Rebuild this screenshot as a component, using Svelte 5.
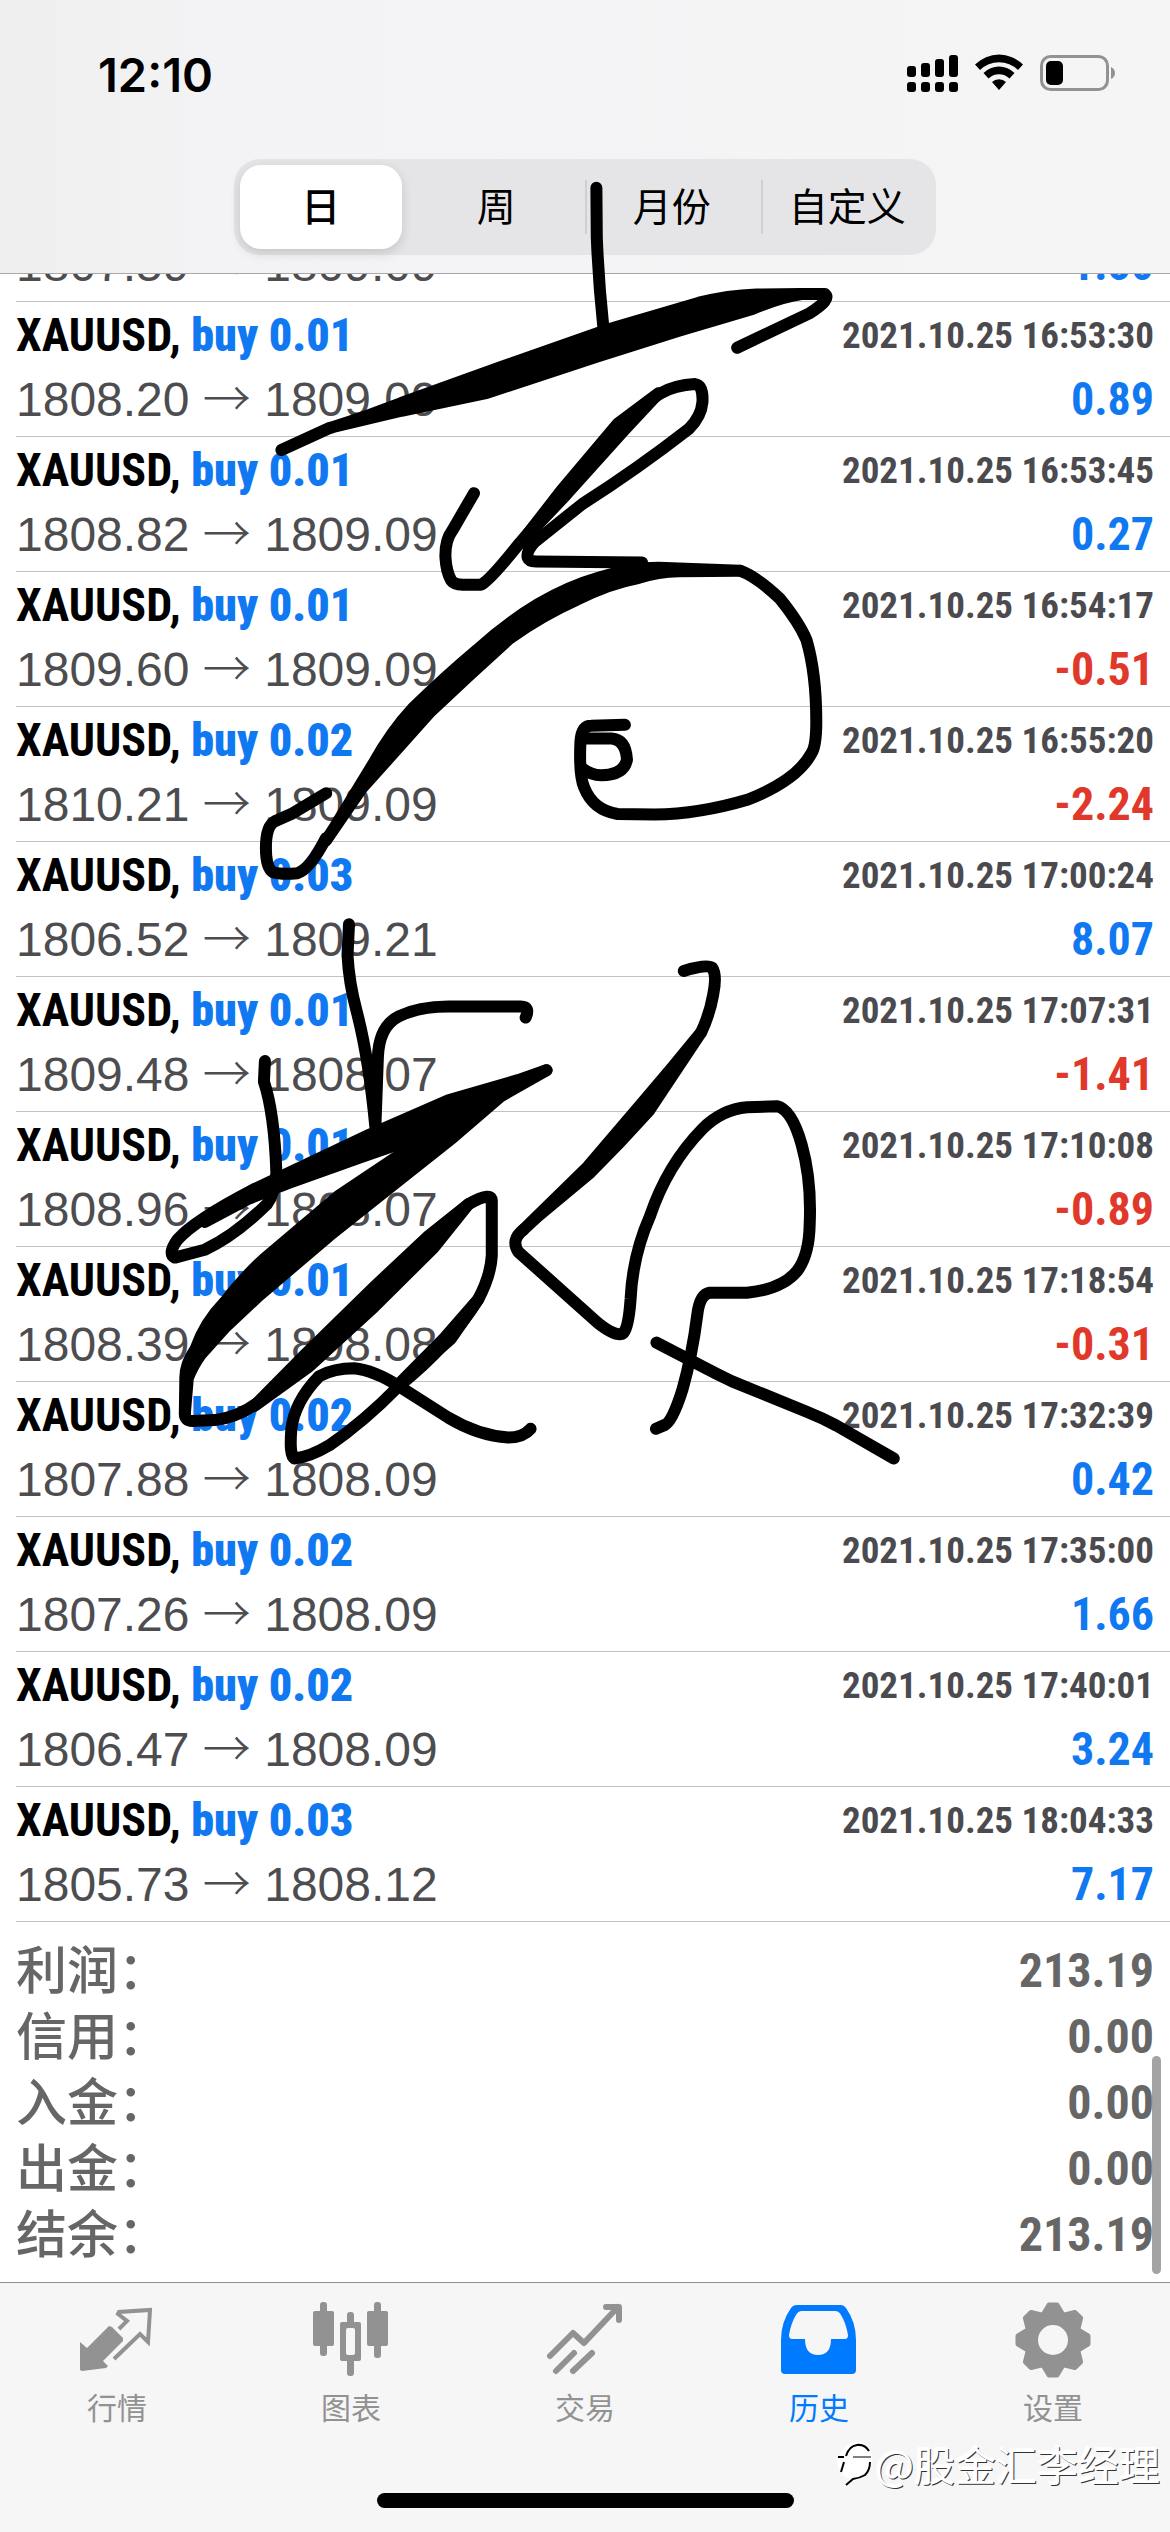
<script>
  const periods = ['日', '周', '月份', '自定义'];
  let period = $state('日');

  // the first row is scrolled under the header, only its price line is left
  const trades = [
    { open: '1807.59', close: '1809.09', profit: '1.50' },
    { lot: '0.01', open: '1808.20', close: '1809.09', time: '2021.10.25 16:53:30', profit: '0.89' },
    { lot: '0.01', open: '1808.82', close: '1809.09', time: '2021.10.25 16:53:45', profit: '0.27' },
    { lot: '0.01', open: '1809.60', close: '1809.09', time: '2021.10.25 16:54:17', profit: '-0.51' },
    { lot: '0.02', open: '1810.21', close: '1809.09', time: '2021.10.25 16:55:20', profit: '-2.24' },
    { lot: '0.03', open: '1806.52', close: '1809.21', time: '2021.10.25 17:00:24', profit: '8.07' },
    { lot: '0.01', open: '1809.48', close: '1808.07', time: '2021.10.25 17:07:31', profit: '-1.41' },
    { lot: '0.01', open: '1808.96', close: '1808.07', time: '2021.10.25 17:10:08', profit: '-0.89' },
    { lot: '0.01', open: '1808.39', close: '1808.08', time: '2021.10.25 17:18:54', profit: '-0.31' },
    { lot: '0.02', open: '1807.88', close: '1808.09', time: '2021.10.25 17:32:39', profit: '0.42' },
    { lot: '0.02', open: '1807.26', close: '1808.09', time: '2021.10.25 17:35:00', profit: '1.66' },
    { lot: '0.02', open: '1806.47', close: '1808.09', time: '2021.10.25 17:40:01', profit: '3.24' },
    { lot: '0.03', open: '1805.73', close: '1808.12', time: '2021.10.25 18:04:33', profit: '7.17' },
  ];

  const totals = [
    ['利润', '213.19'],
    ['信用', '0.00'],
    ['入金', '0.00'],
    ['出金', '0.00'],
    ['结余', '213.19'],
  ];

  const tabs = [
    { id: 'quotes', label: '行情' },
    { id: 'chart', label: '图表' },
    { id: 'trade', label: '交易' },
    { id: 'history', label: '历史' },
    { id: 'settings', label: '设置' },
  ];
  let current = $state('history');
</script>

<div class="app">
  <header>
    <div class="status">
      <time>12:10</time>
      <svg class="status-icons" viewBox="0 0 210 40" aria-hidden="true">
        <g>
          <rect x="1" y="12" width="9" height="11" rx="3" />
          <rect x="15" y="9" width="9" height="14" rx="3" />
          <rect x="29" y="5" width="9" height="18" rx="3" />
          <rect x="43" y="1" width="9" height="22" rx="3" />
          <rect x="1" y="28" width="9" height="10" rx="3" />
          <rect x="15" y="28" width="9" height="10" rx="3" />
          <rect x="29" y="28" width="9" height="10" rx="3" />
          <rect x="43" y="28" width="9" height="10" rx="3" />
        </g>
        <path d="M69 10.500 A34 34 0 0 1 117 10.500 L112 16 A27 27 0 0 0 74 16 Z" />
        <path d="M77.500 19 A22 22 0 0 1 108.500 19 L103.500 24.500 A15 15 0 0 0 82.500 24.500 Z" />
        <path d="M86 28 A10 10 0 0 1 100 28 L93 36 Z" />
        <rect x="135.500" y="2.500" width="66" height="33" rx="9" class="cell" />
        <rect x="140" y="7" width="17" height="24" rx="5" />
        <path d="M205 13 q4 2 4 6 t-4 6 Z" class="cap" />
      </svg>
    </div>
    <div class="segments">
      {#each periods as p}
        <button type="button" class:selected={period === p} onclick={() => (period = p)}>
          <span>{p}</span>
        </button>
      {/each}
    </div>
  </header>

  <main>
    <ul class="trades">
      {#each trades as t}
        <li>
          {#if t.time}
            <div class="line">
              <span class="symbol">XAUUSD, <b>buy {t.lot}</b></span>
              <span class="time">{t.time}</span>
            </div>
          {/if}
          <div class="line">
            <span class="price">{t.open} <i>→</i> {t.close}</span>
            <span class="profit" class:loss={t.profit.startsWith('-')}>{t.profit}</span>
          </div>
        </li>
      {/each}
    </ul>
    <dl class="totals">
      {#each totals as [name, value]}
        <div>
          <dt>{name}：</dt>
          <dd>{value}</dd>
        </div>
      {/each}
    </dl>
    <div class="scrollbar"></div>
  </main>

  <footer>
    <nav>
      {#each tabs as tab}
        <a href="#{tab.id}" class:active={current === tab.id} onclick={() => (current = tab.id)}>
          <svg viewBox="0 0 80 80" aria-hidden="true">
            {#if tab.id === 'quotes'}
              <path d="M3 42 L10 48 L32 26 L35 27 L46 38 V41 L26 61 L31 66 L29 68 L5 71 L3 70 Z" />
              <path class="line-4" d="M42 29 L50 21 L41 14 L42 12 L73 10 L71 42 L63 34 L37 59" />
            {:else if tab.id === 'chart'}
              <rect x="2" y="11" width="21" height="35" rx="2" />
              <rect x="9" y="2" width="7" height="54" rx="3" />
              <path fill-rule="evenodd" d="M31 22 H48 Q50 22 50 24 V59 Q50 61 48 61 H31 Q29 61 29 59 V24 Q29 22 31 22 Z M37 28 Q35 28 35 30 V53 Q35 55 37 55 H42 Q44 55 44 53 V30 Q44 28 42 28 Z" />
              <rect x="36" y="12" width="7" height="13" rx="3" />
              <rect x="36" y="58" width="7" height="18" rx="3" />
              <rect x="56" y="11" width="21" height="35" rx="2" />
              <rect x="63" y="2" width="7" height="56" rx="3" />
            {:else if tab.id === 'trade'}
              <path class="line-6" d="M5 56 L28 33 L39 43 L73 7 M61 7 H74 V20" />
              <path class="line-6" d="M11 71 L29 53 M28 71 L47 53" />
            {:else if tab.id === 'history'}
              <path fill-rule="evenodd" d="M18 5 H62 Q65 5 67 8 Q77 22 77 40 V70 Q77 74 73 74 H6 Q2 74 2 70 V40 Q2 22 12 8 Q14 5 18 5 Z M23 11 Q19 11 17 15 Q12 23 10 35 Q10 39 13 39 H26 Q26 55 39 55 Q52 55 52 39 H66 Q69 39 69 35 Q67 23 62 15 Q60 11 56 11 Z" />
            {:else}
              <circle class="ring" cx="40" cy="40" r="22" />
              {#each [0, 45, 90, 135, 180, 225, 270, 315] as angle}
                <path class="tooth" transform="rotate({angle} 40 40)" d="M36 5 H44 L50 15 H30 Z" />
              {/each}
            {/if}
          </svg>
          <span>{tab.label}</span>
        </a>
      {/each}
    </nav>
    <div class="home"></div>
    <div class="watermark">
      <svg viewBox="0 0 40 48" aria-hidden="true">
        <path class="blob" d="M10 8 Q22 -2 33 7 Q42 22 32 35 Q24 40 13 46 L14 40 Q2 34 2 20 Z" />
        <path d="M3 18 H9 M11 17 Q14 7 22 6 Q30 5 34 12 M9 23 L6 33 M35 23 Q35 31 30 36 Q25 39 18 40 L11 46" />
        <path class="thin" d="M18 18 H36" />
      </svg>
      <span>@股金汇李经理</span>
    </div>
  </footer>

  <!-- handwritten marks over the whole screen -->
  <svg class="ink" viewBox="0 0 1170 2532" aria-hidden="true">
    <g transform="translate(230 150) scale(0.408 0.4847)">
      <path d="M898 78 L899 180 Q903 270 915 365" />
      <path class="full" d="M126 619 L240 575 Q330 552 420 522 L660 449 L920 372 L1150 315 Q1220 300 1290 298 L1400 297 Q1350 303 1280 328 L1100 373 L900 426 L630 501 L420 538 L245 573 Z" />
      <path d="M1400 297 L1458 297 Q1475 308 1420 337 L1243 408" />
      <path d="M598 708 L545 785 Q527 805 528 840 Q530 870 542 888 Q550 897 570 897 L615 897 Q635 890 710 811 L816 708 L958 572 Q1010 525 1053 503 Q1090 485 1140 483 Q1160 485 1158 520 Q1155 550 1125 575 Q1000 657 864 730 L745 810 Q725 830 730 842 Q733 849 750 849 L1010 851" />
      <path class="full" d="M715 808 L811 704 L950 565 L1050 502 L966 578 L823 712 Z" />
      <path d="M236 1327 L150 1370 L110 1385 Q88 1395 88 1440 Q88 1480 105 1490 Q125 1495 165 1492 Q195 1485 235 1420" />
      <path class="full" d="M235 1425 L258 1395 L350 1268 Q395 1200 448 1152 Q530 1085 605 1032 Q680 975 755 937 Q830 900 905 882 Q980 862 1050 862 L1250 868 L1100 869 Q1050 870 1000 883 Q925 895 850 928 Q765 960 685 1008 Q590 1080 492 1158 L322 1318 Z" />
      <path d="M1250 868 Q1290 880 1347 925 Q1395 975 1413 1011 Q1437 1080 1437 1180 Q1437 1230 1425 1245 Q1390 1300 1270 1340 Q1150 1370 1040 1371 L950 1370 Q890 1362 868 1315 Q855 1290 859 1220 Q862 1188 885 1188 L968 1186" />
      <path d="M862 1214 L935 1214 Q970 1216 973 1258 Q965 1290 910 1290 Q885 1290 862 1275" />
    </g>
    <g transform="translate(150 880) scale(0.4975 0.3954)">
      <path d="M400 112 L397 190 Q400 260 415 330 Q440 450 453 625 L458 450 Q460 370 500 345 Q540 320 600 320 L745 320 Q765 320 755 348" />
      <path d="M231 458 L229 510 Q250 590 254 740 Q252 790 235 820 Q170 900 110 935 L50 955 Q35 945 55 910 Q90 860 210 782" />
      <path class="full" d="M797 481 L740 506 L600 557 L440 645 L210 782 L110 865 L200 805 L275 768 L420 703 L540 650 L600 600 Z" />
      <path class="full" d="M797 481 L520 680 L378 800 L228 960 Q185 1010 150 1068 Q110 1120 92 1185 Q70 1225 71 1262 L70 1350 L76 1260 Q85 1230 102 1200 L152 1130 L220 1050 L360 900 L480 780 L610 650 L730 520 Z" />
      <path d="M70 1350 Q70 1368 85 1368 L130 1366 Q180 1360 230 1310 L640 820 Q690 785 687 815 L687 950 Q685 1000 660 1060 Q600 1180 500 1280 Q430 1370 360 1430 Q320 1460 290 1463 Q280 1455 284 1390 Q290 1320 340 1255 Q370 1235 410 1235 Q450 1240 500 1280 L600 1360 Q660 1405 720 1410 Q750 1410 765 1388" />
      <path class="full" d="M210 1330 L312 1200 L450 1030 L560 900 L640 820 L570 930 L450 1080 L320 1230 Z" />
      <path class="full" d="M660 1060 L592 1158 L500 1275 L605 1160 Z" />
      <path d="M1073 230 Q1120 212 1130 222 Q1140 240 1132 290 Q1125 340 1108 385" />
      <path class="full" d="M1108 385 Q1050 475 992 560 L880 725 L750 885 L780 850 L885 740 Q945 665 1002 585 Z" />
      <path d="M750 885 Q725 910 740 940 L900 1120 Q940 1160 952 1145 Q962 1130 966 1060 Q970 950 1005 850 Q1040 720 1110 630 Q1150 580 1200 575 L1260 572 Q1290 580 1310 670 Q1330 760 1326 870 Q1325 950 1300 990 Q1270 1035 1200 1044 L1125 1044 Q1105 1048 1100 1100 Q1090 1200 1070 1290 Q1050 1370 1035 1378 L1017 1388" />
      <path d="M1018 1170 L1110 1230 Q1140 1250 1170 1268 L1320 1345 Q1350 1360 1380 1380 L1495 1463" />
    </g>
  </svg>
</div>

<style>
  :global(body) {
    margin: 0;
    background: #fff;
  }

  .app {
    position: relative;
    overflow: hidden;
    font-family: "Liberation Sans", "Noto Sans CJK SC", sans-serif;
    background: #fff;
  }

  header {
    position: relative;
    z-index: 1;
    background: linear-gradient(90deg, #efefef, #f3f3f5 20%, #f5f5f6);
    border-bottom: 1px solid #a8a8aa;
    padding-bottom: 18px;
  }

  .status {
    display: flex;
    justify-content: space-between;
    align-items: center;
    height: 159px;
    padding: 0 54px 11px 98px;
    box-sizing: border-box;
  }

  time {
    font: 600 47px "Inter", sans-serif;
    color: #000;
  }

  .status-icons {
    width: 210px;
    height: 40px;
  }

  .status-icons .cell {
    fill: none;
    stroke: #929293;
    stroke-width: 3;
  }

  .status-icons .cap {
    fill: #929293;
  }

  .segments {
    display: grid;
    grid-template-columns: repeat(4, 1fr);
    width: 60%;
    height: 96px;
    margin: 0 auto;
    border-radius: 26px;
    background: #e5e5e7;
  }

  .segments button {
    position: relative;
    padding: 6px 8px 6px 6px;
    border: 0;
    background: none;
    color: #000;
    font: 400 39px "Noto Sans CJK SC", sans-serif;
  }

  .segments span {
    display: flex;
    align-items: center;
    justify-content: center;
    height: 84px;
    padding-bottom: 6px;
    box-sizing: border-box;
    border-radius: 21px;
  }

  .segments .selected span {
    background: #fff;
    font-weight: 500;
    box-shadow: 0 4px 12px rgba(0, 0, 0, 0.14);
  }

  .segments button:nth-child(n + 3)::before {
    content: '';
    position: absolute;
    left: 0;
    top: 21px;
    width: 2px;
    height: 54px;
    background: #cfcfd2;
  }

  main {
    position: relative;
    overflow: hidden;
  }

  .trades {
    list-style: none;
    margin: -43px 0 0 16px;
    padding: 0;
  }

  .trades li {
    padding: 1px 16px 5px 0;
    border-bottom: 1px solid #c2c2c4;
  }

  .line {
    display: flex;
    justify-content: space-between;
    align-items: center;
    height: 64px;
    white-space: nowrap;
  }

  .symbol,
  .time,
  .profit,
  dd {
    font-family: "Roboto Condensed", "Liberation Sans Narrow", "Liberation Sans", sans-serif;
    font-weight: 700;
  }

  .symbol,
  .profit {
    font-size: 46px;
  }

  .symbol {
    color: #000;
  }

  .symbol b,
  .profit {
    color: #1079f2;
  }

  .time {
    font-size: 37px;
    color: #4b4b4f;
  }

  .price {
    font-size: 48px;
    color: #4d4d50;
  }

  .price i {
    font: 300 48px "Noto Sans CJK SC", sans-serif;
    line-height: 1;
  }

  .profit.loss {
    color: #e0392c;
  }

  .totals {
    margin: 0;
    padding: 15px 16px;
    color: #666;
  }

  .totals div {
    display: flex;
    justify-content: space-between;
    align-items: center;
    height: 66px;
  }

  dt {
    padding-bottom: 6px;
    font: 500 51px "Noto Sans CJK SC", sans-serif;
    line-height: 60px;
  }

  dd {
    margin: 0;
    font-size: 48px;
  }

  .scrollbar {
    position: absolute;
    right: 9px;
    bottom: 8px;
    width: 9px;
    height: 218px;
    border-radius: 5px;
    background: rgba(0, 0, 0, 0.36);
  }

  footer {
    position: relative;
    border-top: 1px solid #8f8f91;
    background: #f6f6f6;
    padding: 17px 0 24px;
  }

  nav {
    display: grid;
    grid-template-columns: repeat(5, 1fr);
  }

  nav a {
    display: flex;
    flex-direction: column;
    align-items: center;
    gap: 8px;
    color: #929292;
    fill: #929292;
    stroke: none;
    text-decoration: none;
    font: 400 30px "Noto Sans CJK SC", sans-serif;
    line-height: 36px;
  }

  nav a.active {
    color: #007aff;
    fill: #007aff;
  }

  nav svg {
    width: 80px;
    height: 80px;
  }

  .line-4,
  .line-6 {
    fill: none;
    stroke: currentColor;
    stroke-width: 4;
  }

  .line-6 {
    stroke-width: 6;
    stroke-linecap: round;
    stroke-linejoin: round;
  }

  .ring {
    fill: none;
    stroke: currentColor;
    stroke-width: 14;
  }

  .tooth {
    stroke: currentColor;
    stroke-width: 5;
    stroke-linejoin: round;
  }

  .home {
    width: 417px;
    height: 15px;
    margin: 69px auto 0;
    border-radius: 8px;
    background: #000;
  }

  .watermark {
    position: absolute;
    right: 10px;
    bottom: 45px;
    display: flex;
    align-items: center;
    color: #fff;
    font: 400 41px "Noto Sans CJK SC", sans-serif;
    line-height: 48px;
    text-shadow: 1px 1px 0 #333, -1px -1px 1px #fff;
  }

  .watermark svg {
    width: 40px;
    height: 48px;
    fill: none;
    stroke: #000;
    stroke-width: 2;
  }

  .watermark .blob {
    fill: #fff;
    stroke: none;
  }

  .watermark .thin {
    stroke-width: 1;
  }

  .ink {
    position: absolute;
    z-index: 2;
    top: 0;
    left: 0;
    width: 100%;
    pointer-events: none;
  }

  .ink path {
    fill: none;
    stroke: #000;
    stroke-width: 12px;
    stroke-linecap: round;
    stroke-linejoin: round;
    vector-effect: non-scaling-stroke;
  }

  .ink .full {
    fill: #000;
  }
</style>
